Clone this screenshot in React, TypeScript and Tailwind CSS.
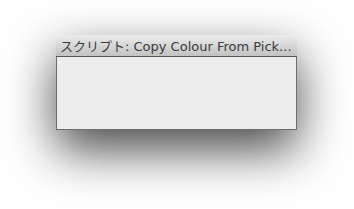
export default function App() {
  return (
    <div className="w-[354px] h-[209px] bg-white overflow-hidden pt-[35px] pl-[56px]">
      <div className="w-[241px] h-[95px] flex flex-col rounded-t-[4px] shadow-[0_20px_50px_rgba(0,0,0,0.72)]">
        <div
          className="h-[22px] rounded-t-[4px] border-b border-[#555] bg-gradient-to-b from-[#ececec] to-[#c2c2c2] flex items-center pl-[4px] pt-[1px] overflow-hidden whitespace-nowrap text-[13px] text-[#3a3a3a] leading-none"
          style={{ fontFamily: '"DejaVu Sans", "Noto Sans CJK JP", sans-serif' }}
        >
          スクリプト: Copy Colour From Pick...
        </div>
        <div className="flex-1 bg-[#ededed] border-x border-b border-[#6e6e6e]" />
      </div>
    </div>
  );
}
